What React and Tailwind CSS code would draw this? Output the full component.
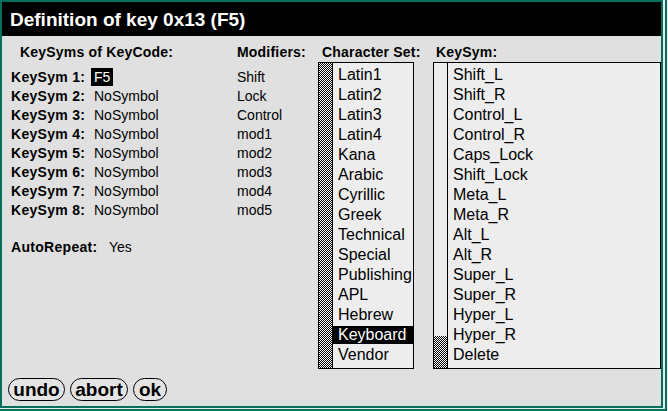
const keysyms = ["F5", "NoSymbol", "NoSymbol", "NoSymbol", "NoSymbol", "NoSymbol", "NoSymbol", "NoSymbol"];
const modifiers = ["Shift", "Lock", "Control", "mod1", "mod2", "mod3", "mod4", "mod5"];
const charsets = ["Latin1", "Latin2", "Latin3", "Latin4", "Kana", "Arabic", "Cyrillic", "Greek", "Technical", "Special", "Publishing", "APL", "Hebrew", "Keyboard", "Vendor"];
const symbols = ["Shift_L", "Shift_R", "Control_L", "Control_R", "Caps_Lock", "Shift_Lock", "Meta_L", "Meta_R", "Alt_L", "Alt_R", "Super_L", "Super_R", "Hyper_L", "Hyper_R", "Delete"];

const stipple = "bg-[repeating-conic-gradient(#000_0%_25%,#fff_0%_50%)] bg-[length:2px_2px]";

function ListBox({ items, selected, width, full }) {
  return (
    <div className={`flex h-[307px] border border-black bg-[#ededed] ${width}`}>
      <div className="relative w-[14px] shrink-0 border-r border-black">
        {full ? (
          <div className={`absolute inset-0 ${stipple}`} />
        ) : (
          <div className={`absolute bottom-0 left-0 right-0 h-[32px] ${stipple}`} />
        )}
      </div>
      <div className="flex flex-1 flex-col gap-[2px] pt-[3px]">
        {items.map((it) => (
          <div
            key={it}
            className={`h-[18px] pl-[5px] text-[16px] leading-[18px] ${it === selected ? "bg-black text-white" : ""}`}
          >
            {it}
          </div>
        ))}
      </div>
    </div>
  );
}

function Btn({ children, w }) {
  return (
    <div className={`flex h-[23px] items-center justify-center rounded-full border border-black bg-[#e4e4e4] text-[19px] font-bold leading-none ${w}`}>
      {children}
    </div>
  );
}

export default function App() {
  return (
    <div className="h-[411px] w-[668px] bg-[#e8e8e8] font-['Liberation_Sans',Arial,sans-serif] text-black">
      <div className="w-[667px] border-b-2 border-r-2 border-[#00705c] pb-[1px] pr-[2px]">
        <div className="flex h-[408px] w-[663px] flex-col border-2 border-[#00705c] bg-[#e0e0e0]">
          <div className="h-[34px] bg-black pl-[8px] text-[19px] font-bold leading-[35px] text-white">
            Definition of key 0x13 (F5)
          </div>

          <div className="mt-[7px] flex">
            <div className="w-[316px]">
              <div className="flex h-[19px] text-[14px] font-bold leading-[19px] tracking-[0.2px]">
                <span className="w-[235px] pl-[18px]">KeySyms of KeyCode:</span>
                <span>Modifiers:</span>
              </div>

              <div className="mt-[6px] pl-[9px] text-[14px] leading-[19px]">
                {keysyms.map((k, i) => (
                  <div key={i} className="flex h-[19px]">
                    <span className="w-[80px] font-bold tracking-[0.3px]">KeySym {i + 1}:</span>
                    <span className="w-[146px]">
                      <span className={`px-[3px] ${i === 0 ? "inline-block h-[18px] bg-black leading-[18px] text-white" : ""}`}>{k}</span>
                    </span>
                    <span>{modifiers[i]}</span>
                  </div>
                ))}
                <div className="mt-[18px] flex">
                  <span className="w-[98px] font-bold tracking-[0.3px]">AutoRepeat:</span>
                  <span>Yes</span>
                </div>
              </div>
            </div>

            <div className="w-[115px]">
              <div className="h-[19px] pl-[4px] text-[14px] font-bold leading-[19px] tracking-[0.2px]">Character Set:</div>
              <ListBox items={charsets} selected="Keyboard" width="w-[96px]" full />
            </div>

            <div>
              <div className="h-[19px] pl-[3px] text-[14px] font-bold leading-[19px] tracking-[0.2px]">KeySym:</div>
              <ListBox items={symbols} width="w-[228px]" />
            </div>
          </div>

          <div className="mt-[9px] flex gap-[5px] pl-[6px]">
            <Btn w="w-[57px]">undo</Btn>
            <Btn w="w-[58px]">abort</Btn>
            <Btn w="w-[34px]">ok</Btn>
          </div>
        </div>
      </div>
    </div>
  );
}
